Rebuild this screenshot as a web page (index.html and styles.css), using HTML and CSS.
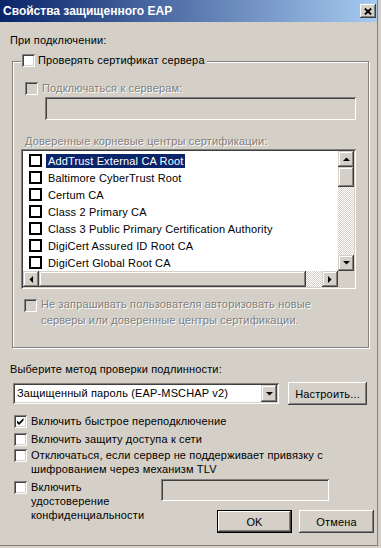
FILE: index.html
```html
<!DOCTYPE html>
<html lang="ru">

<head>
    <meta charset="UTF-8">
    <meta name="viewport" content="width=device-width, initial-scale=1.0">
    <title>Свойства защищенного EAP</title>
    <link rel="stylesheet" href="styles.css">
</head>

<body>
    <div class="window">
        <div class="titlebar">
            <span class="title">Свойства защищенного EAP</span>
            <span class="close">
                <svg width="8" height="7" viewBox="0 0 8 7"><path d="M0.8 0.5 L7.2 6.5 M7.2 0.5 L0.8 6.5" stroke="#000" stroke-width="1.8"/></svg>
            </span>
        </div>

        <div class="content">
            <div class="label top-label">При подключении:</div>

            <div class="group">
                <div class="group-head">
                    <span class="box"></span>
                    <span>Проверять сертификат сервера</span>
                </div>

                <div class="check-row conn-row disabled">
                    <span class="box"></span>
                    <span>Подключаться к серверам:</span>
                </div>
                <div class="field servers-field"></div>

                <div class="label trust-label disabled">Доверенные корневые центры сертификации:</div>
                <div class="listbox">
                    <ul class="list">
                        <li class="item selected"><span class="lbox"></span><span class="name">AddTrust External CA Root</span></li>
                        <li class="item"><span class="lbox"></span><span class="name">Baltimore CyberTrust Root</span></li>
                        <li class="item"><span class="lbox"></span><span class="name">Certum CA</span></li>
                        <li class="item"><span class="lbox"></span><span class="name">Class 2 Primary CA</span></li>
                        <li class="item"><span class="lbox"></span><span class="name">Class 3 Public Primary Certification Authority</span></li>
                        <li class="item"><span class="lbox"></span><span class="name">DigiCert Assured ID Root CA</span></li>
                        <li class="item"><span class="lbox"></span><span class="name">DigiCert Global Root CA</span></li>
                    </ul>
                    <div class="vscroll">
                        <span class="sbtn"><svg width="7" height="4" viewBox="0 0 7 4"><polygon points="0,4 7,4 3.5,0.5"/></svg></span>
                        <span class="thumb vthumb"></span>
                        <span class="track"></span>
                        <span class="sbtn"><svg width="7" height="4" viewBox="0 0 7 4"><polygon points="0,0 7,0 3.5,3.5"/></svg></span>
                    </div>
                    <div class="hscroll">
                        <span class="sbtn"><svg width="4" height="7" viewBox="0 0 4 7"><polygon points="4,0 4,7 0.5,3.5"/></svg></span>
                        <span class="thumb hthumb"></span>
                        <span class="track"></span>
                        <span class="sbtn"><svg width="4" height="7" viewBox="0 0 4 7"><polygon points="0,0 0,7 3.5,3.5"/></svg></span>
                    </div>
                    <div class="corner"></div>
                </div>

                <div class="check-row noask disabled">
                    <span class="box"></span>
                    <span>Не запрашивать пользователя авторизовать новые<br>серверы или доверенные центры сертификации.</span>
                </div>
            </div>

            <div class="label method-label">Выберите метод проверки подлинности:</div>
            <div class="method-row">
                <div class="combo">
                    <span class="combo-text">Защищенный пароль (EAP-MSCHAP v2)</span>
                    <span class="sbtn combo-btn"><svg width="7" height="4" viewBox="0 0 7 4"><polygon points="0,0 7,0 3.5,3.5"/></svg></span>
                </div>
                <span class="btn setup-btn">Настроить...</span>
            </div>

            <div class="check-row opt-row fast-row">
                <span class="box">
                    <svg width="7" height="7" viewBox="0 0 7 7"><polygon points="0,2.5 2,4.5 6.5,0 6.5,2.5 2,7 0,5"/></svg>
                </span>
                <span>Включить быстрое переподключение</span>
            </div>
            <div class="check-row opt-row nap-row">
                <span class="box"></span>
                <span>Включить защиту доступа к сети</span>
            </div>
            <div class="check-row opt-row tlv-row">
                <span class="box"></span>
                <span>Отключаться, если сервер не поддерживает привязку с<br>шифрованием через механизм TLV</span>
            </div>

            <div class="bottom-row">
                <div class="check-row opt-row privacy-row">
                    <span class="box"></span>
                    <span>Включить<br>удостоверение<br>конфиденциальности</span>
                </div>
                <div class="bottom-right">
                    <div class="field privacy-field"></div>
                    <div class="buttons">
                        <span class="btn default">OK</span>
                        <span class="btn">Отмена</span>
                    </div>
                </div>
            </div>
        </div>
    </div>
</body>

</html>
```

FILE: styles.css
```css
* {
    margin: 0;
    padding: 0;
    box-sizing: border-box;
}

li {
    list-style: none;
}

body {
    background-color: #d4d0c8;
    font-family: "Liberation Sans", Arial, sans-serif;
    font-size: 11px;
    letter-spacing: 0.15px;
    color: #000;
}

.window {
    width: 378px;
    height: 546px;
    border-right: 1px solid #808080;
    border-bottom: 1px solid #808080;
}

/* заголовок окна */
.titlebar {
    height: 22px;
    display: flex;
    align-items: center;
    justify-content: space-between;
    padding: 0 1px 0 3px;
    background: linear-gradient(to right, #0a246a, #a6caf0);
}

.title {
    color: #fff;
    font-weight: bold;
    font-size: 12px;
    letter-spacing: 0;
}

.close {
    width: 16px;
    height: 14px;
    display: flex;
    align-items: center;
    justify-content: center;
    background-color: #d4d0c8;
    box-shadow: inset -1px -1px #404040, inset 1px 1px #fff, inset -2px -2px #808080;
}

.content {
    padding-left: 10px;
}

.label {
    line-height: 14px;
}

.top-label {
    margin-top: 11px;
}

.disabled {
    color: #808080;
    text-shadow: 1px 1px 0 #fff;
}

/* рамка группы */
.group {
    width: 357px;
    height: 287px;
    margin: 14px 0 0 2px;
    border: 1px solid #808080;
    box-shadow: 1px 1px 0 #fff, inset 1px 1px 0 #fff;
}

.group-head {
    display: flex;
    align-items: center;
    gap: 3px;
    width: max-content;
    margin: -8px 0 0 8px;
    padding: 0 2px 0 1px;
    line-height: 13px;
    background-color: #d4d0c8;
}

.box {
    width: 13px;
    height: 13px;
    flex: none;
    display: flex;
    align-items: center;
    justify-content: center;
    background-color: #fff;
    box-shadow: inset 1px 1px #808080, inset -1px -1px #fff, inset 2px 2px #404040, inset -2px -2px #d4d0c8;
}

.disabled .box {
    background-color: #d4d0c8;
}

.check-row {
    display: flex;
    align-items: flex-start;
    gap: 4px;
    line-height: 13px;
}

.conn-row {
    margin: 15px 0 0 12px;
}

.field {
    background-color: #d4d0c8;
    box-shadow: inset 1px 1px #808080, inset -1px -1px #fff, inset 2px 2px #404040, inset -2px -2px #d4d0c8;
}

.servers-field {
    width: 311px;
    height: 23px;
    margin: 2px 0 0 32px;
}

.trust-label {
    margin: 14px 0 0 12px;
}

/* список сертификатов */
.listbox {
    width: 335px;
    height: 140px;
    margin: 1px 0 0 8px;
    padding: 2px;
    display: grid;
    grid-template-columns: 315px 16px;
    grid-template-rows: 120px 16px;
    background-color: #fff;
    box-shadow: inset 1px 1px #808080, inset -1px -1px #fff, inset 2px 2px #404040, inset -2px -2px #d4d0c8;
}

.list {
    padding-top: 1px;
    overflow: hidden;
}

.item {
    height: 17px;
    display: flex;
    align-items: center;
    padding-left: 6px;
    white-space: nowrap;
}

.lbox {
    width: 13px;
    height: 13px;
    flex: none;
    border: 2px solid #000;
    background-color: #fff;
}

.name {
    margin-left: 4px;
    padding: 0 2px;
    line-height: 14px;
}

.selected .name {
    background-color: #0a246a;
    color: #fff;
}

.vscroll {
    display: flex;
    flex-direction: column;
}

.hscroll {
    display: flex;
}

.sbtn,
.thumb {
    flex: none;
    width: 16px;
    height: 16px;
    display: flex;
    align-items: center;
    justify-content: center;
    background-color: #d4d0c8;
    box-shadow: inset -1px -1px #404040, inset 1px 1px #d4d0c8, inset -2px -2px #808080, inset 2px 2px #fff;
}

.vthumb {
    height: 20px;
}

.hthumb {
    width: 267px;
}

.track {
    flex: 1;
    background: repeating-conic-gradient(#fff 0 25%, #d4d0c8 0 50%) 0 0 / 2px 2px;
}

.corner {
    background-color: #d4d0c8;
}

.noask {
    margin: 7px 0 0 11px;
    line-height: 16px;
}

.noask .box {
    margin-top: 3px;
}

/* нижняя часть */
.method-label {
    margin-top: 14px;
}

.method-row {
    display: flex;
    align-items: flex-start;
    margin-top: 6px;
}

.combo {
    width: 266px;
    height: 21px;
    margin: 1px 0 0 3px;
    padding: 2px;
    display: flex;
    background-color: #fff;
    box-shadow: inset 1px 1px #808080, inset -1px -1px #fff, inset 2px 2px #404040, inset -2px -2px #d4d0c8;
}

.combo-text {
    flex: 1;
    padding-left: 2px;
    line-height: 17px;
}

.combo-btn {
    height: 17px;
}

.btn {
    width: 75px;
    height: 23px;
    display: flex;
    align-items: center;
    justify-content: center;
    box-shadow: inset -1px -1px #404040, inset 1px 1px #fff, inset -2px -2px #808080;
}

.btn.default {
    box-shadow: inset 0 0 0 1px #000, inset -2px -2px #404040, inset 2px 2px #fff, inset -3px -3px #808080;
}

.setup-btn {
    width: 79px;
    margin-left: 9px;
}

.opt-row {
    margin-left: 4px;
    line-height: 14px;
}

.opt-row .box {
    margin-top: 1px;
}

.fast-row {
    margin-top: 9px;
}

.nap-row {
    margin-top: 4px;
}

.tlv-row {
    margin-top: 2px;
}

.bottom-row {
    display: flex;
    margin: 3px 0 0 0;
}

.privacy-row {
    width: 147px;
    margin-top: 1px;
}

.privacy-field {
    width: 168px;
    height: 22px;
}

.buttons {
    display: flex;
    gap: 7px;
    margin: 9px 0 0 56px;
}
```
